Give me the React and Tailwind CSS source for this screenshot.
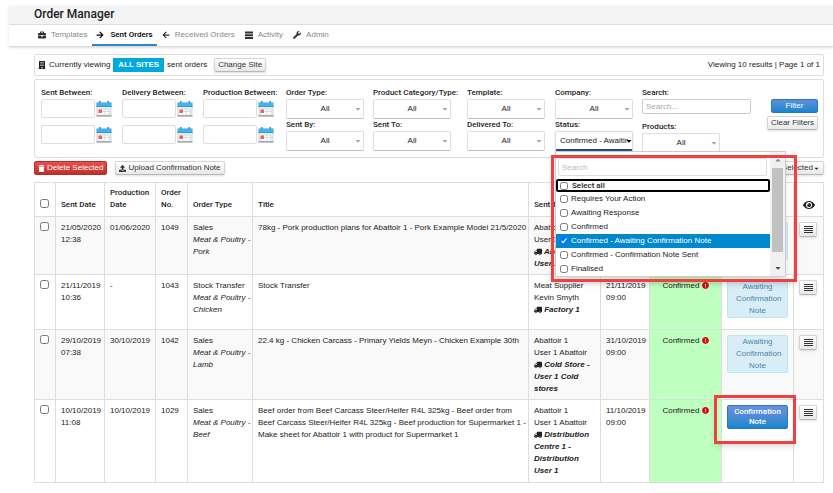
import React, { useState } from "react";
import {
  FaArrowLeft,
  FaArrowRight,
  FaBriefcase,
  FaBuilding,
  FaCaretDown,
  FaCaretUp,
  FaExclamationCircle,
  FaEye,
  FaTrash,
  FaTruck,
  FaUpload,
  FaWrench,
} from "react-icons/fa";

const statuses = [
  "Requires Your Action",
  "Awaiting Response",
  "Confirmed",
  "Confirmed - Awaiting Confirmation Note",
  "Confirmed - Confirmation Note Sent",
  "Finalised",
];

const orders = [
  {
    sent: "21/05/2020 12:38", production: "01/06/2020", no: "1049",
    type: "Sales", category: "Meat & Poultry - Pork",
    title: "78kg - Pork production plans for Abattoir 1 - Pork Example Model 21/5/2020",
    to: "Abattoir 1", user: "User 1 Abattoir", delivery: "Abattoir 1 - User 1",
    due: "22/05/2020 09:00", height: "h-[58px]", note: "awaiting",
  },
  {
    sent: "21/11/2019 10:36", production: "-", no: "1043",
    type: "Stock Transfer", category: "Meat & Poultry - Chicken",
    title: "Stock Transfer",
    to: "Meat Supplier", user: "Kevin Smyth", delivery: "Factory 1",
    due: "21/11/2019 09:00", height: "h-[55px]", note: "awaiting",
  },
  {
    sent: "29/10/2019 07:38", production: "30/10/2019", no: "1042",
    type: "Sales", category: "Meat & Poultry - Lamb",
    title: "22.4 kg - Chicken Carcass - Primary Yields Meyn - Chicken Example 30th",
    to: "Abattoir 1", user: "User 1 Abattoir", delivery: "Cold Store - User 1 Cold stores",
    due: "31/10/2019 09:00", height: "h-[70px]", note: "awaiting",
  },
  {
    sent: "10/10/2019 11:08", production: "10/10/2019", no: "1029",
    type: "Sales", category: "Meat & Poultry - Beef",
    title: "Beef order from Beef Carcass Steer/Heifer R4L 325kg - Beef order from Beef Carcass Steer/Heifer R4L 325kg - Beef production for Supermarket 1 - Make sheet for Abattoir 1 with product for Supermarket 1",
    to: "Abattoir 1", user: "User 1 Abattoir", delivery: "Distribution Centre 1 - Distribution User 1",
    due: "11/10/2019 09:00", height: "h-[83px]", note: "ready",
  },
];

const greyButton =
  "flex items-center justify-center rounded-xs border border-[#d4d4d4] border-b-[#b8b8b8] bg-gradient-to-b from-white to-[#e8e8e8] text-[#333] shadow-sm";

const TasksIcon = () => (
  <svg viewBox="0 0 16 16" className="size-2" fill="currentColor">
    <path d="M0 1h16v4H0zM0 6.500h16v4H0zM0 12h16v4H0z" />
  </svg>
);

const MenuIcon = () => (
  <svg viewBox="0 0 9 7" className="h-[7px] w-[9px]" fill="currentColor" shapeRendering="crispEdges">
    <path d="M0 0h9v1H0zM0 2h9v1H0zM0 4h9v1H0zM0 6h9v1H0z" />
  </svg>
);

const CalendarIcon = () => (
  <svg viewBox="0 0 16 16" className="size-4">
    <rect x="1" y="2" width="14" height="13" fill="#eef1f2" stroke="#c6ced2" strokeWidth="0.800" />
    <path d="M0.500 1.500h15v4.500h-15z" fill="#3db5ee" />
    <path d="M0.500 5h15v1h-15z" fill="#2a9bd8" />
    <path d="M3 0h1.500v2H3zM11.500 0h1.500v2h-1.500z" fill="#5b7f95" />
    <path d="M3 8h10v5H3z" fill="#fff" />
    <path d="M3 8h10M9 8v5M6 10.500h7M13 8v5" stroke="#c4cdd2" strokeWidth="0.700" />
    <path d="M2.500 8.500h3.500v3.500H2.500z" fill="#f0604c" />
    <path d="M0.500 14.300h15v1.200h-15z" fill="#8d9ba2" />
  </svg>
);

const DateRange = ({ label, className }) => (
  <fieldset className={className}>
    <legend className="h-3 font-['Roboto',sans-serif] font-medium whitespace-nowrap">{label}</legend>
    {["from", "to"].map((end) => (
      <div key={end} className="mb-[7px] flex items-center gap-px">
        <input
          type="text"
          aria-label={`${label} ${end}`}
          className="h-[19px] w-[54px] rounded-xs border border-[#ddd] bg-white px-1"
        />
        <button type="button" aria-label="Pick a date">
          <CalendarIcon />
        </button>
      </div>
    ))}
  </fieldset>
);

const Dropdown = ({ id, label, value = "All", open = false, children }) => (
  <div>
    <label htmlFor={id} className="block h-3 font-['Roboto',sans-serif] font-medium whitespace-nowrap">
      {label}
    </label>
    <div className="relative w-[78px]">
      <select
        id={id}
        className={
          open
            ? "h-5 w-full appearance-none rounded-xs border border-[#ddd] border-b-2 border-b-[#1c4f86] bg-white pr-1 pl-1 shadow-sm"
            : "h-5 w-full appearance-none rounded-xs border border-[#ddd] border-b-[#bbb] bg-white text-center [text-align-last:center]"
        }
      >
        <option>{value}</option>
      </select>
      <FaCaretDown
        className={
          open
            ? "pointer-events-none absolute top-1.5 right-0 size-2 text-black"
            : "pointer-events-none absolute top-1.5 right-0.5 size-2 text-[#aaa]"
        }
      />
      {children}
    </div>
  </div>
);

const StatusMenu = ({ selected, onToggle }) => (
  <div className="absolute top-full left-0 z-20 flex w-[231px] border border-[#ccc] bg-white shadow-md">
    <div className="min-w-0 flex-1 pt-1.5">
      <input
        type="text"
        placeholder="Search"
        aria-label="Search statuses"
        className="mx-0.5 mb-[3px] block h-[18px] w-[209px] rounded-xs border border-[#ddd] px-[3px] placeholder:text-[#bbb]"
      />
      <label className="flex h-[13px] items-center gap-1 rounded-xs border-2 border-black px-0.5 font-['Roboto',sans-serif] font-medium">
        <input type="checkbox" className="size-2" />
        Select all
      </label>
      {statuses.map((status) => (
        <label
          key={status}
          className="flex h-[14px] items-center gap-[3px] px-1 has-checked:bg-[#0088cc] has-checked:text-white"
        >
          <input
            type="checkbox"
            className="size-2"
            checked={selected.includes(status)}
            onChange={() => onToggle(status)}
          />
          {status}
        </label>
      ))}
    </div>
    <div className="flex w-[15px] flex-col items-center justify-between bg-[#f1f1f1] py-1">
      <FaCaretUp className="size-2 text-[#888]" />
      <div className="mb-2 h-[84px] w-[11px] bg-[#c1c1c1]" />
      <FaCaretDown className="size-2 text-[#444]" />
    </div>
    <div className="pointer-events-none absolute top-[3px] -right-3 -bottom-1.5 -left-[5px] border-3 border-[#f04040] shadow-md" />
  </div>
);

const tabs = [
  { name: "Templates", icon: <FaBriefcase /> },
  { name: "Sent Orders", icon: <FaArrowRight />, active: true },
  { name: "Received Orders", icon: <FaArrowLeft /> },
  { name: "Activity", icon: <TasksIcon /> },
  { name: "Admin", icon: <FaWrench /> },
];

const App = () => {
  const [selected, setSelected] = useState(["Confirmed - Awaiting Confirmation Note"]);

  const toggleStatus = (status) => {
    setSelected(
      selected.includes(status) ? selected.filter((s) => s !== status) : [...selected, status]
    );
  };

  return (
    <div className="overflow-x-hidden bg-white pt-1.5 pl-[9px] font-['Liberation_Sans',Arial,sans-serif] text-[8px] leading-3 text-[#222]">
      <header className="border-b border-[#ddd] shadow-sm">
        <h1 className="border-b border-[#ddd] bg-[#f4f4f4] pb-0.5 pl-[25px] font-['Roboto',sans-serif] text-[12px] leading-4 font-medium">
          Order Manager
        </h1>
        <nav className="flex pl-6">
          {tabs.map((tab) => (
            <a
              key={tab.name}
              href="#"
              className={
                tab.active
                  ? "flex h-[21px] items-center gap-1.5 border-b-2 border-[#2f86cc] px-1 font-['Roboto',sans-serif] font-medium text-black"
                  : "flex h-[21px] items-center gap-[5px] border-b-2 border-transparent px-[5px] text-[#888] [&>svg]:text-[#333]"
              }
            >
              {tab.icon}
              {tab.name}
            </a>
          ))}
        </nav>
      </header>

      <main className="pt-[7px] pr-[9px] pl-[25px]">
        {/* Site bar */}
        <section className="flex h-[22px] items-center justify-between rounded-xs border border-[#ddd] px-[3px]">
          <div className="flex items-center gap-[3px]">
            <FaBuilding />
            <span>Currently viewing</span>
            <strong className="bg-[#00a8e0] px-[5px] py-px text-white">ALL SITES</strong>
            <span>sent orders</span>
            <button type="button" className={`${greyButton} ml-1 h-[14px] px-[3px]`}>Change Site</button>
          </div>
          <span>Viewing 10 results | Page 1 of 1</span>
        </section>

        {/* Filters */}
        <form className="mt-[3px] flex h-[79px] rounded-xs border border-[#ddd] pt-[7px] pr-[5px] pl-1.5">
          <DateRange label="Sent Between:" className="w-[81px]" />
          <DateRange label="Delivery Between:" className="w-[81px]" />
          <DateRange label="Production Between:" className="w-[83px]" />
          <div className="w-[87px]">
            <Dropdown id="order-type" label="Order Type:" />
            <Dropdown id="sent-by" label="Sent By:" />
          </div>
          <div className="w-[94px]">
            <Dropdown id="category" label="Product Category/Type:" />
            <Dropdown id="sent-to" label="Sent To:" />
          </div>
          <div className="w-[88px]">
            <Dropdown id="template" label="Template:" />
            <Dropdown id="delivered-to" label="Delivered To:" />
          </div>
          <div className="w-[87px]">
            <Dropdown id="company" label="Company:" />
            <Dropdown id="status" label="Status:" value="Confirmed - Awaiting Confirmation Note" open>
              <StatusMenu selected={selected} onToggle={toggleStatus} />
            </Dropdown>
          </div>
          <div>
            <label htmlFor="search" className="block h-3 font-['Roboto',sans-serif] font-medium">Search:</label>
            <input
              id="search"
              type="text"
              placeholder="Search..."
              className="mb-[7px] block h-[15px] w-[109px] rounded-xs border border-[#ccc] px-[3px] placeholder:text-[#aaa]"
            />
            <Dropdown id="products" label="Products:" />
          </div>
          <div className="ml-auto flex flex-col items-end gap-[3px] pt-3">
            <button
              type="submit"
              className="h-[14px] w-[47px] rounded-xs border border-[#2a78bf] bg-gradient-to-b from-[#5b8fdc] to-[#0b87cf] leading-none text-white"
            >
              Filter
            </button>
            <button type="button" className={`${greyButton} h-[14px] px-[3px]`}>Clear Filters</button>
          </div>
        </form>

        {/* Bulk actions */}
        <div className="flex items-center gap-2 py-[3px]">
          <button
            type="button"
            className="flex h-[14px] items-center gap-0.5 rounded-xs border border-[#b52b27] bg-gradient-to-b from-[#e8504c] to-[#c12e2a] px-[3px] text-white"
          >
            <FaTrash className="size-[7px]" />
            Delete Selected
          </button>
          <button type="button" className={`${greyButton} h-[14px] gap-0.5 px-[3px]`}>
            <FaUpload className="size-[7px]" />
            Upload Confirmation Note
          </button>
          <button type="button" className={`${greyButton} ml-auto h-[14px] px-[3px]`}>
            Export Selected
            <FaCaretDown className="size-[7px]" />
          </button>
        </div>

        <table className="mt-1 w-full table-fixed border-collapse [&_td]:border [&_td]:border-[#ddd] [&_td]:pt-[5px] [&_td]:pl-[5px] [&_td]:align-top [&_th]:border [&_th]:border-[#ddd] [&_th]:pb-[5px] [&_th]:pl-[5px] [&_th]:text-left [&_th]:align-bottom [&_th]:font-medium">
          <thead className="font-['Roboto',sans-serif]">
            <tr className="h-[34px]">
              <th className="w-[21px]">
                <input type="checkbox" aria-label="Select all orders" className="mb-[3px] block size-[9px]" />
              </th>
              <th className="w-[49px]">Sent Date</th>
              <th className="w-[51px]">Production Date</th>
              <th className="w-8">Order No.</th>
              <th className="w-[65px]">Order Type</th>
              <th>Title</th>
              <th className="w-[72px]">Sent To</th>
              <th className="w-[49px]">Delivery Date</th>
              <th className="w-[72px]">Status</th>
              <th className="w-[72px]">Confirmation</th>
              <th className="w-[30px]">
                <FaEye className="ml-1 size-3" aria-label="View" />
              </th>
            </tr>
          </thead>
          <tbody>
            {orders.map((order) => (
              <tr key={order.no} className={`${order.height} odd:bg-[#f9f9f9]`}>
                <td>
                  <input type="checkbox" aria-label={`Select order ${order.no}`} className="block size-[9px]" />
                </td>
                <td>{order.sent}</td>
                <td>{order.production}</td>
                <td>{order.no}</td>
                <td>
                  {order.type}
                  <br />
                  <em>{order.category}</em>
                </td>
                <td>{order.title}</td>
                <td className="pr-[5px]">
                  {order.to}
                  <br />
                  {order.user}
                  <br />
                  <em className="font-bold">
                    <FaTruck className="inline -scale-x-100" /> {order.delivery}
                  </em>
                </td>
                <td>{order.due}</td>
                <td className="bg-[#bfffbf] pr-[5px] text-center">
                  Confirmed <FaExclamationCircle className="inline size-[7px] text-red-600" />
                </td>
                <td className="relative pr-[5px]">
                  {order.note === "awaiting" ? (
                    <div className="rounded-xs border border-[#bce8f1] bg-[#d9edf7] px-2 text-center text-[#4a87a8]">
                      Awaiting Confirmation Note
                    </div>
                  ) : (
                    <>
                      <button
                        type="button"
                        className="block w-full rounded-xs border border-[#2a78bf] bg-gradient-to-b from-[#6a8fdc] to-[#0b87cf] px-1 py-px leading-[10px] font-['Roboto',sans-serif] font-medium text-white"
                      >
                        Confirmation Note
                      </button>
                      <div className="pointer-events-none absolute -top-[5px] -left-2 h-[49px] w-[82px] border-3 border-[#f04040] shadow-md" />
                    </>
                  )}
                </td>
                <td>
                  <button type="button" aria-label="Order menu" className={`${greyButton} h-[15px] w-[18px]`}>
                    <MenuIcon />
                  </button>
                </td>
              </tr>
            ))}
          </tbody>
        </table>
      </main>
    </div>
  );
};

export default App;
